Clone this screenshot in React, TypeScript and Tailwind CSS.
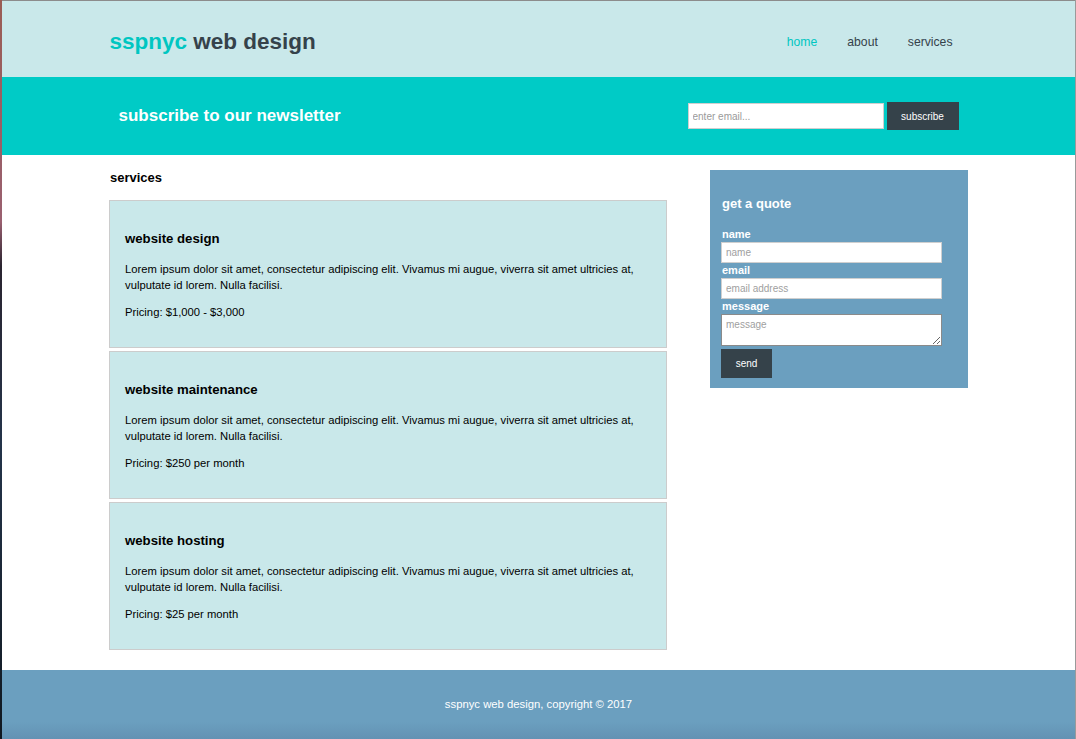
import React from "react";

const services = [
  { title: "website design", price: "Pricing: $1,000 - $3,000" },
  { title: "website maintenance", price: "Pricing: $250 per month" },
  { title: "website hosting", price: "Pricing: $25 per month" },
];

const lorem =
  "Lorem ipsum dolor sit amet, consectetur adipiscing elit. Vivamus mi augue, viverra sit amet ultricies at, vulputate id lorem. Nulla facilisi.";

export default function App() {
  return (
    <div className="flex min-h-[739px] w-[1076px] bg-white font-['Liberation_Sans',Arial,sans-serif] text-black">
      <div className="w-[2px] shrink-0 bg-[linear-gradient(180deg,#9a5d55_0%,#9a6070_30%,#2a2430_36%,#24344a_60%,#101820_100%)]" />
      <div className="flex min-w-0 flex-1 flex-col border-t border-[#8c8c8c]">
        <header className="h-[76px] bg-[#c9e8ea]">
          <div className="mx-auto flex h-full w-[858px] items-center justify-between pt-[6px]">
            <h1 className="text-[22.5px] font-bold leading-none">
              <span className="text-[#00c6c1]">sspnyc</span>{" "}
              <span className="text-[#35424a]">web design</span>
            </h1>
            <nav className="flex text-[12.2px] text-[#35424a]">
              <a className="px-[15px] text-[#00c6c1]">home</a>
              <a className="px-[15px]">about</a>
              <a className="px-[15px]">services</a>
            </nav>
          </div>
        </header>

        <section className="h-[78px] bg-[#00cbc6]">
          <div className="mx-auto flex h-full w-[858px] items-center justify-between">
            <h2 className="pl-[9px] text-[17px] font-bold text-white">
              subscribe to our newsletter
            </h2>
            <form className="mr-[9px] flex items-center gap-[3px]">
              <input
                placeholder="enter email..."
                className="h-[26px] w-[196px] border border-[#cfcfcf] bg-white px-[4px] text-[10px] placeholder:text-[#9a9a9a] outline-none"
              />
              <button
                type="button"
                className="h-[28px] w-[72px] bg-[#35424a] text-[10px] text-white"
              >
                subscribe
              </button>
            </form>
          </div>
        </section>

        <main className="mx-auto flex w-[859px] justify-between pb-[19px]">
          <div className="w-[558px]">
            <h2 className="pt-[15px] pb-[14px] pl-[1px] text-[13px] leading-[16px] font-bold">
              services
            </h2>
            <div className="flex flex-col gap-[3px]">
              {services.map((s) => (
                <div
                  key={s.title}
                  className="h-[148px] border border-[#cccccc] bg-[#c9e8ea] px-[15px] pt-[30px]"
                >
                  <h3 className="text-[13.2px] leading-[16px] font-bold">
                    {s.title}
                  </h3>
                  <p className="mt-[14px] text-[11.25px] leading-[16px]">{lorem}</p>
                  <p className="mt-[11px] text-[11.25px] leading-[16px]">{s.price}</p>
                </div>
              ))}
            </div>
          </div>

          <aside className="mt-[15px] h-[218px] w-[258px] bg-[#6b9fbf] px-[11px] pt-[26px] text-white">
            <h3 className="pl-[1px] text-[13px] leading-[16px] font-bold">get a quote</h3>
            <form className="mt-[15px] flex flex-col">
              <label className="pl-[1px] text-[11px] leading-[15px] font-bold">name</label>
              <input
                placeholder="name"
                className="h-[21px] w-[221px] border border-[#cfcfcf] bg-white px-[4px] text-[10px] placeholder:text-[#a0a0a0] outline-none"
              />
              <label className="pl-[1px] text-[11px] leading-[15px] font-bold">email</label>
              <input
                placeholder="email address"
                className="h-[21px] w-[221px] border border-[#cfcfcf] bg-white px-[4px] text-[10px] placeholder:text-[#a0a0a0] outline-none"
              />
              <label className="pl-[1px] text-[11px] leading-[15px] font-bold">message</label>
              <textarea
                placeholder="message"
                className="h-[32px] w-[221px] resize border border-[#8a8a8a] bg-white px-[4px] py-[2px] text-[10px] placeholder:text-[#a0a0a0] outline-none"
              />
              <button
                type="button"
                className="mt-[3px] h-[29px] w-[51px] bg-[#35424a] text-[10px] text-white"
              >
                send
              </button>
            </form>
          </aside>
        </main>

        <footer className="mt-auto flex h-[69px] items-center justify-center bg-[linear-gradient(180deg,#6b9fbf_0%,#6b9fbf_75%,#6392b3_100%)] text-[11.3px] text-white">
          sspnyc web design, copyright © 2017
        </footer>
      </div>
      <div className="w-[1px] shrink-0 bg-[#9a9a9a]" />
    </div>
  );
}
